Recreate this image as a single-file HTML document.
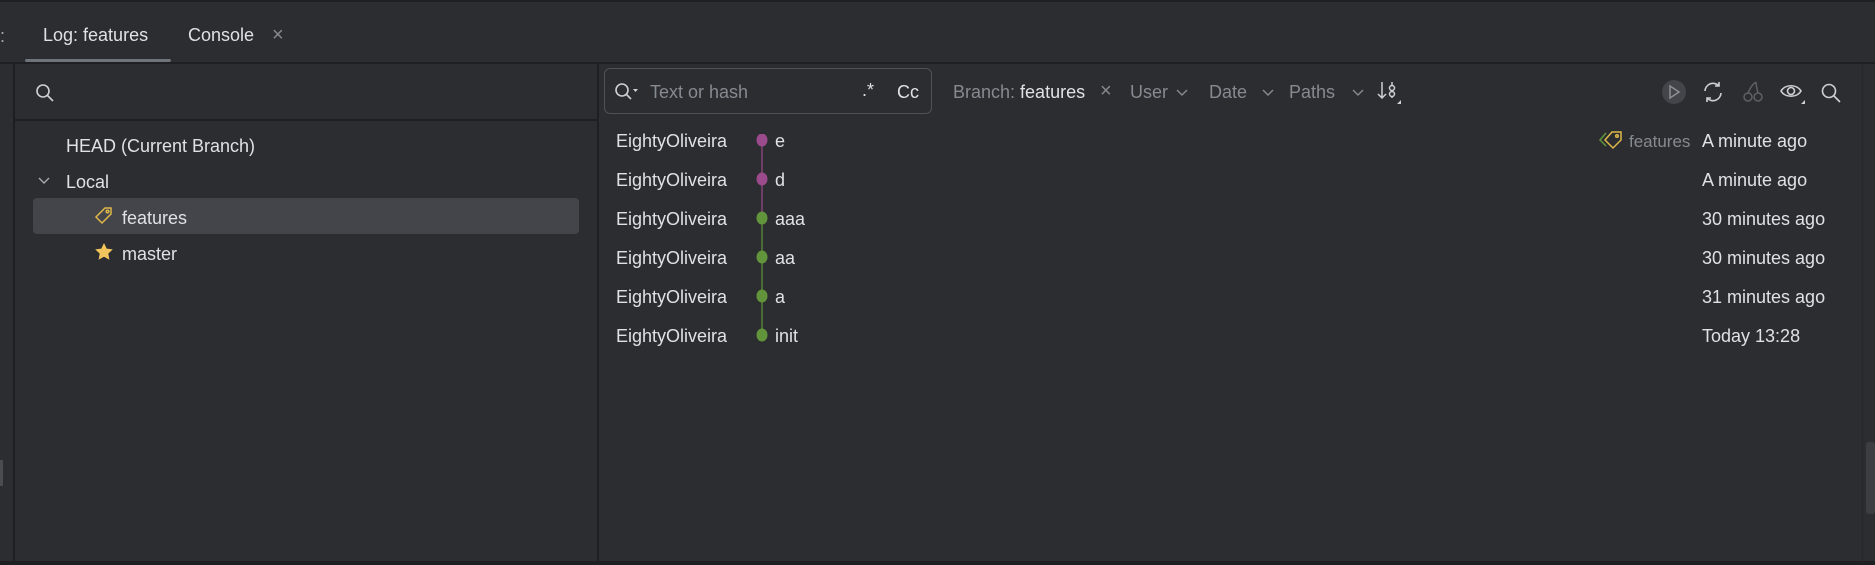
<!DOCTYPE html>
<html><head><meta charset="utf-8"><style>
*{margin:0;padding:0;box-sizing:border-box}
body{width:1875px;height:565px;background:#2b2d30;font-family:"Liberation Sans","Noto Sans CJK SC",sans-serif;color:#dfe1e5;font-size:18px;position:relative;overflow:hidden}
.a{position:absolute;white-space:nowrap}
.dim{color:#868a91}
.line{position:absolute;background:#1e1f22}
.t{margin-top:2px}
</style></head><body>
<div class="line" style="left:0;top:0;width:1875px;height:2px"></div>
<div class="a" style="left:0;top:26px;color:#aaa">:</div>
<div class="a" style="left:43px;top:25px">Log: features</div>
<div style="position:absolute;left:25px;top:59px;width:146px;height:3px;background:#6f737a;border-radius:2px"></div>
<div class="a" style="left:188px;top:25px">Console</div>
<div class="a dim" style="left:272px;top:24px;font-size:20px">×</div>
<div class="line" style="left:0;top:62px;width:1875px;height:2px"></div>
<div class="line" style="left:13px;top:63px;width:2px;height:502px"></div>
<div class="line" style="left:597px;top:63px;width:2px;height:502px"></div>
<div class="line" style="left:15px;top:119px;width:582px;height:2px"></div>
<div class="line" style="left:0;top:561px;width:1875px;height:4px"></div>
<div style="position:absolute;left:0;top:460px;width:3px;height:26px;background:#4a4c50"></div>
<div class="line" style="left:1862px;top:63px;width:1px;height:500px;background:#26282b"></div>
<div style="position:absolute;left:1866px;top:442px;width:9px;height:72px;background:#3c3e42;border-radius:3px"></div>
<svg class="a" style="left:35px;top:83px" width="20" height="20" viewBox="0 0 20 20" fill="none" stroke="#ced0d6" stroke-width="1.6"><circle cx="8" cy="8" r="6"/><path d="M12.5 12.5L18 18"/></svg>
<div class="a" style="left:66px;top:136px">HEAD (Current Branch)</div>
<svg class="a" style="left:38px;top:176px" width="12" height="10" viewBox="0 0 12 10" fill="none" stroke="#aaa" stroke-width="1.4"><path d="M1 2l5 5 5-5"/></svg>
<div class="a" style="left:66px;top:172px">Local</div>
<div style="position:absolute;left:33px;top:198px;width:546px;height:36px;background:#43454a;border-radius:4px"></div>
<svg class="a" style="left:94px;top:206px" width="20" height="20" viewBox="0 0 20 20" fill="none" stroke="#e0b84a" stroke-width="1.5"><path d="M11 2h6v6l-9 9-6-6z"/><circle cx="13.5" cy="5.5" r="1.3"/></svg>
<div class="a" style="left:122px;top:208px">features</div>
<svg class="a" style="left:94px;top:242px" width="20" height="20" viewBox="0 0 20 20"><path d="M10 1l2.7 5.6 6.1.8-4.5 4.2 1.1 6.1L10 14.8l-5.4 2.9 1.1-6.1L1.2 7.4l6.1-.8z" fill="#f2c55c"/></svg>
<div class="a" style="left:122px;top:244px">master</div>
<div style="position:absolute;left:604px;top:68px;width:328px;height:46px;border:1.5px solid #4e5157;border-radius:6px"></div>
<svg class="a" style="left:614px;top:82px" width="26" height="20" viewBox="0 0 26 20" fill="none" stroke="#ced0d6" stroke-width="1.6"><circle cx="8" cy="8" r="6"/><path d="M12.5 12.5L17 17"/><path d="M19 7l2.5 3 2.5-3z" fill="#ced0d6" stroke="none"/></svg>
<div class="a dim" style="left:650px;top:82px">Text or hash</div>
<div class="a" style="left:862px;top:80px">.*</div>
<div class="a" style="left:897px;top:82px">Cc</div>
<div class="a dim" style="left:953px;top:82px">Branch: <span style="color:#dfe1e5">features</span></div>
<div class="a dim" style="left:1100px;top:80px;font-size:20px">×</div>
<div class="a dim" style="left:1130px;top:82px">User</div>
<div class="a dim" style="left:1209px;top:82px">Date</div>
<div class="a dim" style="left:1289px;top:82px">Paths</div>
<svg class="a" style="left:1176px;top:88px" width="12" height="10" viewBox="0 0 12 10" fill="none" stroke="#868a91" stroke-width="1.4"><path d="M1 2l5 5 5-5"/></svg>
<svg class="a" style="left:1262px;top:88px" width="12" height="10" viewBox="0 0 12 10" fill="none" stroke="#868a91" stroke-width="1.4"><path d="M1 2l5 5 5-5"/></svg>
<svg class="a" style="left:1352px;top:88px" width="12" height="10" viewBox="0 0 12 10" fill="none" stroke="#868a91" stroke-width="1.4"><path d="M1 2l5 5 5-5"/></svg>
<svg class="a" style="left:1377px;top:80px" width="26" height="26" viewBox="0 0 26 26" fill="none" stroke="#ced0d6" stroke-width="1.5"><path d="M5 2v16M1 14l4 4 4-4M15 2v16"/><circle cx="15" cy="8" r="2.5" fill="#2b2d30"/><circle cx="15" cy="14" r="2.5" fill="#2b2d30"/><path d="M24 20v4h-4z" fill="#ced0d6" stroke="none"/></svg>
<div style="position:absolute;left:1662px;top:80px;width:24px;height:24px;border-radius:50%;background:#43454a"></div>
<svg class="a" style="left:1664px;top:82px" width="20" height="20" viewBox="0 0 20 20" fill="none" stroke="#8c8f94" stroke-width="1.5"><path d="M6 4l9 6-9 6z"/></svg>
<svg class="a" style="left:1701px;top:80px" width="24" height="24" viewBox="0 0 24 24" fill="none" stroke="#ced0d6" stroke-width="1.6"><path d="M4 11a8 8 0 0 1 14-5M20 13a8 8 0 0 1-14 5"/><path d="M18 2v4h-4M6 22v-4h4"/></svg>
<svg class="a" style="left:1741px;top:80px" width="24" height="24" viewBox="0 0 24 24" fill="none" stroke="#5d6066" stroke-width="1.5"><circle cx="7" cy="17" r="4"/><circle cx="17" cy="17" r="4"/><path d="M7 13c2-5 5-9 8-11M17 13c-1-4-2-8-2-11"/></svg>
<svg class="a" style="left:1779px;top:80px" width="28" height="26" viewBox="0 0 28 26" fill="none" stroke="#ced0d6" stroke-width="1.6"><path d="M2 11c4-7 16-7 20 0-4 7-16 7-20 0z"/><circle cx="12" cy="11" r="3.5"/><path d="M26 20v4h-4z" fill="#ced0d6" stroke="none"/></svg>
<svg class="a" style="left:1820px;top:82px" width="22" height="22" viewBox="0 0 22 22" fill="none" stroke="#ced0d6" stroke-width="1.6"><circle cx="9" cy="9" r="6.5"/><path d="M14 14l6 6"/></svg>
<svg class="a" style="left:755px;top:134px" width="14" height="210" viewBox="0 0 14 210"><path d="M7 6V84" stroke="#9b4a8c" stroke-width="1.2"/><path d="M7 84V201" stroke="#62953b" stroke-width="1.2"/><g fill="#9b4a8c"><ellipse cx="7" cy="6" rx="5.5" ry="6.5"/><ellipse cx="7" cy="45" rx="5.5" ry="6.5"/></g><g fill="#62953b"><ellipse cx="7" cy="84" rx="5.5" ry="6.5"/><ellipse cx="7" cy="123" rx="5.5" ry="6.5"/><ellipse cx="7" cy="162" rx="5.5" ry="6.5"/><ellipse cx="7" cy="201" rx="5.5" ry="6.5"/></g></svg>
<div class="a" style="left:616px;top:131px">EightyOliveira</div>
<div class="a" style="left:616px;top:170px">EightyOliveira</div>
<div class="a" style="left:616px;top:209px">EightyOliveira</div>
<div class="a" style="left:616px;top:248px">EightyOliveira</div>
<div class="a" style="left:616px;top:287px">EightyOliveira</div>
<div class="a" style="left:616px;top:326px">EightyOliveira</div>
<div class="a" style="left:775px;top:131px">e</div>
<div class="a" style="left:775px;top:170px">d</div>
<div class="a" style="left:775px;top:209px">aaa</div>
<div class="a" style="left:775px;top:248px">aa</div>
<div class="a" style="left:775px;top:287px">a</div>
<div class="a" style="left:775px;top:326px">init</div>
<svg class="a" style="left:1598px;top:130px" width="28" height="20" viewBox="0 0 28 20" fill="none" stroke-width="1.5"><path d="M8 3L2 10l6 6" stroke="#62953b"/><path d="M14 2h9v8l-8 8-8-8z" stroke="#e0b84a"/><circle cx="19" cy="6" r="1.3" stroke="#e0b84a"/></svg>
<div class="a dim" style="left:1629px;top:132px;font-size:17px">features</div>
<div class="a" style="left:1702px;top:131px">A minute ago</div>
<div class="a" style="left:1702px;top:170px">A minute ago</div>
<div class="a" style="left:1702px;top:209px">30 minutes ago</div>
<div class="a" style="left:1702px;top:248px">30 minutes ago</div>
<div class="a" style="left:1702px;top:287px">31 minutes ago</div>
<div class="a" style="left:1702px;top:326px">Today 13:28</div>
</body></html>
